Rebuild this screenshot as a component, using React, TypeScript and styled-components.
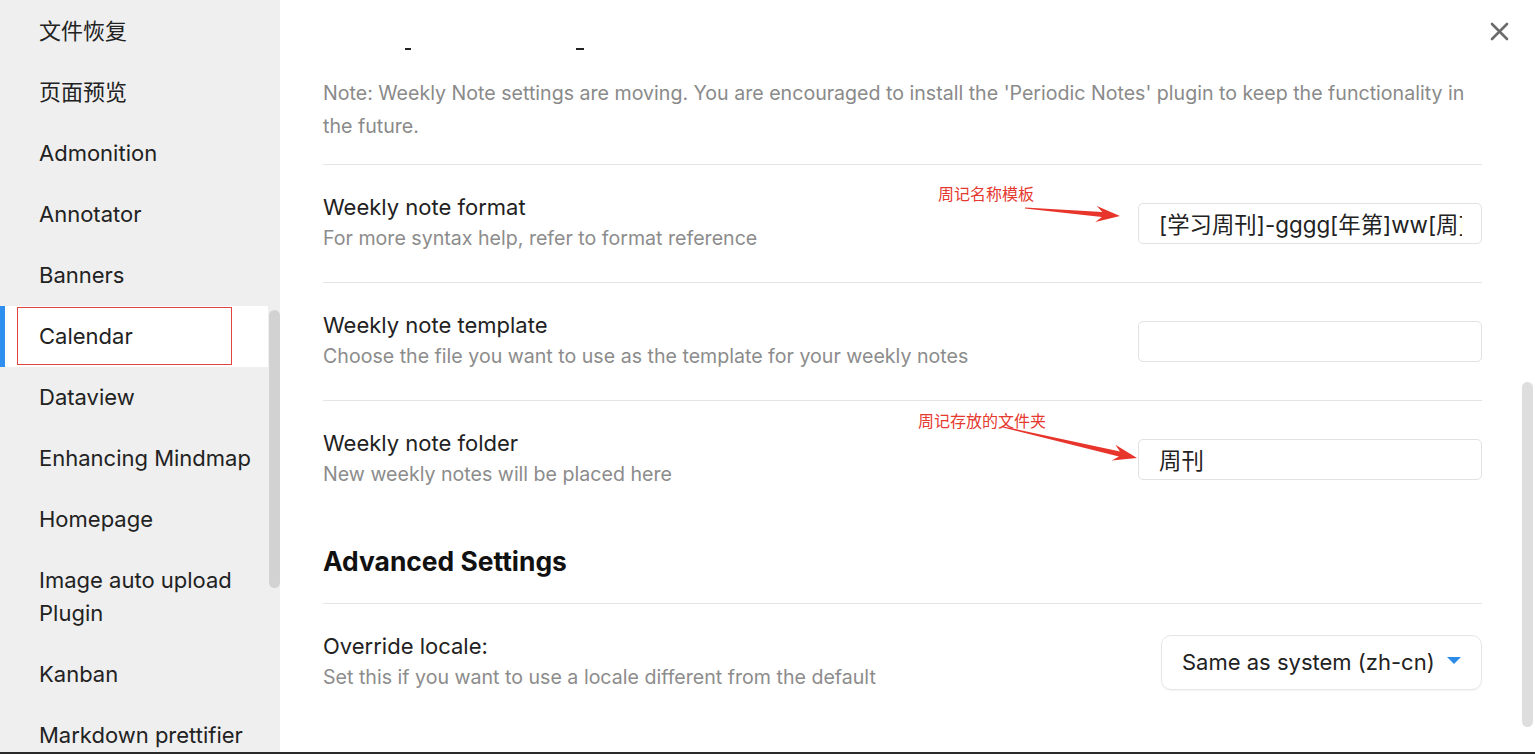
import React from "react";
import styled, { createGlobalStyle } from "styled-components";

const Global = createGlobalStyle`
  html, body { margin: 0; padding: 0; background: #fff; overflow: hidden; }
  body { font-family: Inter, "Noto Sans CJK SC", sans-serif; -webkit-font-smoothing: antialiased; }
  * { box-sizing: border-box; }
`;

const Frame = styled.div`
  display: flex;
  height: 754px;
  border-bottom: 2px solid #2a2a2a;
  overflow: hidden;
`;

const Sidebar = styled.nav`
  position: relative;
  flex: 0 0 280px;
  width: 280px;
  background: #efefef;
  overflow: hidden;
`;

const NavList = styled.ul`
  list-style: none;
  margin: 0;
  padding: 1px 12px 0 0;
`;

const NavItem = styled.li<{ $active?: boolean }>`
  position: relative;
  padding: 14px 0 14px 39px;
  font-size: 22px;
  line-height: 33px;
  color: #222;
  white-space: nowrap;
  background: ${(p) => (p.$active ? "#fff" : "transparent")};
  &::before {
    content: "";
    display: ${(p) => (p.$active ? "block" : "none")};
    position: absolute;
    left: 0;
    top: 0;
    bottom: 0;
    width: 5px;
    background: #2f8ff0;
  }
`;

const MarkBox = styled.span`
  position: absolute;
  left: 17px;
  top: 1px;
  width: 215px;
  height: 58px;
  border: 1px solid #e0453f;
  pointer-events: none;
`;

const Thumb = styled.div<{ $top: number; $height: number; $side: "left" | "right"; $offset: number; $color: string }>`
  position: absolute;
  ${(p) => p.$side}: ${(p) => p.$offset}px;
  top: ${(p) => p.$top}px;
  height: ${(p) => p.$height}px;
  width: 11px;
  border-radius: 6px;
  background: ${(p) => p.$color};
`;

const Main = styled.main`
  position: relative;
  flex: 1;
  background: #fff;
  overflow: hidden;
`;

const Content = styled.div`
  padding: 0 53px 0 43px;
`;

const Stub = styled.div`
  height: 50px;
  display: flex;
  align-items: flex-end;
`;

const Dash = styled.span<{ $left: number; $w: number }>`
  display: block;
  margin-left: ${(p) => p.$left}px;
  width: ${(p) => p.$w}px;
  height: 2px;
  background: #222;
`;

const Note = styled.p`
  margin: 27px 0 0;
  padding-bottom: 21px;
  font-size: 19.6px;
  line-height: 33px;
  color: #8a8a8a;
`;

const Row = styled.div`
  display: flex;
  align-items: center;
  border-top: 1px solid #e4e4e4;
  padding: 27px 0 28px;
`;

const Info = styled.div`
  flex: 1;
`;

const Name = styled.div`
  font-size: 22px;
  line-height: 30px;
  color: #222;
`;

const Desc = styled.div`
  font-size: 19.6px;
  line-height: 32px;
  color: #8c8c8c;
`;

const TextInput = styled.input`
  width: 344px;
  height: 41px;
  border: 1px solid #e2e2e2;
  border-radius: 5px;
  padding: 0 19px 0 20px;
  font-family: Inter, "Noto Sans CJK SC", sans-serif;
  font-size: 22.4px;
  color: #222;
  background: #fff;
  outline: none;
`;

const Heading = styled.h3`
  margin: 0;
  height: 85px;
  display: flex;
  align-items: center;
  font-size: 26.4px;
  font-weight: 700;
  color: #111;
`;

const Select = styled.div`
  width: 321px;
  height: 55px;
  border: 1px solid #e6e6e6;
  border-radius: 10px;
  padding: 0 20px;
  display: flex;
  align-items: center;
  justify-content: space-between;
  font-size: 22px;
  color: #222;
  box-shadow: 0 1px 2px rgba(0, 0, 0, 0.05);
`;

const Caret = styled.span`
  width: 0;
  height: 0;
  border-left: 7px solid transparent;
  border-right: 7px solid transparent;
  border-top: 7px solid #2d8be8;
  margin-top: -4px;
`;

const CloseBtn = styled.button`
  position: absolute;
  top: 22px;
  right: 26px;
  width: 19px;
  height: 19px;
  padding: 0;
  border: none;
  background: none;
  cursor: pointer;
  color: #6b6b6b;
`;

const Overlay = styled.svg`
  position: absolute;
  left: 0;
  top: 0;
  width: 100%;
  height: 100%;
  pointer-events: none;
`;

const navItems = [
  "文件恢复",
  "页面预览",
  "Admonition",
  "Annotator",
  "Banners",
  "Calendar",
  "Dataview",
  "Enhancing Mindmap",
  "Homepage",
  "Image auto upload Plugin",
  "Kanban",
  "Markdown prettifier",
];

function arrowPoints(x1: number, y1: number, x2: number, y2: number) {
  const dx = x2 - x1;
  const dy = y2 - y1;
  const L = Math.hypot(dx, dy);
  const ux = dx / L;
  const uy = dy / L;
  const nx = -uy;
  const ny = ux;
  const at = (d: number, w: number) => `${(x1 + ux * d + nx * w).toFixed(1)},${(y1 + uy * d + ny * w).toFixed(1)}`;
  const shaft = L - 18;
  const head = L - 24;
  return [
    at(0, 0.6),
    at(shaft, 2.6),
    at(head, 8),
    at(L, 0),
    at(head, -8),
    at(shaft, -2.6),
    at(0, -0.6),
  ].join(" ");
}

function SettingRow({ name, desc, children }: { name: string; desc: string; children: React.ReactNode }) {
  return (
    <Row>
      <Info>
        <Name>{name}</Name>
        <Desc>{desc}</Desc>
      </Info>
      {children}
    </Row>
  );
}

export default function App() {
  return (
    <>
      <Global />
      <Frame>
        <Sidebar>
          <NavList>
            {navItems.map((label) => (
              <NavItem key={label} $active={label === "Calendar"}>
                {label === "Image auto upload Plugin" ? (
                  <>
                    Image auto upload
                    <br />
                    Plugin
                  </>
                ) : (
                  label
                )}
                {label === "Calendar" && <MarkBox />}
              </NavItem>
            ))}
          </NavList>
          <Thumb $side="left" $offset={269} $top={310} $height={278} $color="#d2d2d2" />
        </Sidebar>
        <Main>
          <Content>
            <Stub>
              <Dash $left={82} $w={6} />
              <Dash $left={165} $w={8} />
            </Stub>
            <Note>
              Note: Weekly Note settings are moving. You are encouraged to install the 'Periodic Notes' plugin to keep the functionality in the future.
            </Note>
            <SettingRow name="Weekly note format" desc="For more syntax help, refer to format reference">
              <TextInput readOnly value="[学习周刊]-gggg[年第]ww[周]" />
            </SettingRow>
            <SettingRow name="Weekly note template" desc="Choose the file you want to use as the template for your weekly notes">
              <TextInput readOnly value="" />
            </SettingRow>
            <SettingRow name="Weekly note folder" desc="New weekly notes will be placed here">
              <TextInput readOnly value="周刊" />
            </SettingRow>
            <Heading>Advanced Settings</Heading>
            <SettingRow name="Override locale:" desc="Set this if you want to use a locale different from the default">
              <Select>
                <span>Same as system (zh-cn)</span>
                <Caret />
              </Select>
            </SettingRow>
          </Content>
          <CloseBtn aria-label="Close">
            <svg width="19" height="19" viewBox="0 0 19 19">
              <path d="M2 2 L17 17 M17 2 L2 17" stroke="currentColor" strokeWidth="2.6" strokeLinecap="round" />
            </svg>
          </CloseBtn>
          <Thumb $side="right" $offset={2} $top={382} $height={345} $color="#dedede" />
          <Overlay>
            <text x="658" y="200" fill="#e6392f" fontSize="16" fontFamily='"Noto Sans CJK SC", sans-serif'>
              周记名称模板
            </text>
            <polygon points={arrowPoints(745, 208, 840, 216)} fill="#e8352c" />
            <text x="638" y="427" fill="#e6392f" fontSize="16" fontFamily='"Noto Sans CJK SC", sans-serif'>
              周记存放的文件夹
            </text>
            <polygon points={arrowPoints(723, 427, 857, 458)} fill="#e8352c" />
          </Overlay>
        </Main>
      </Frame>
    </>
  );
}
